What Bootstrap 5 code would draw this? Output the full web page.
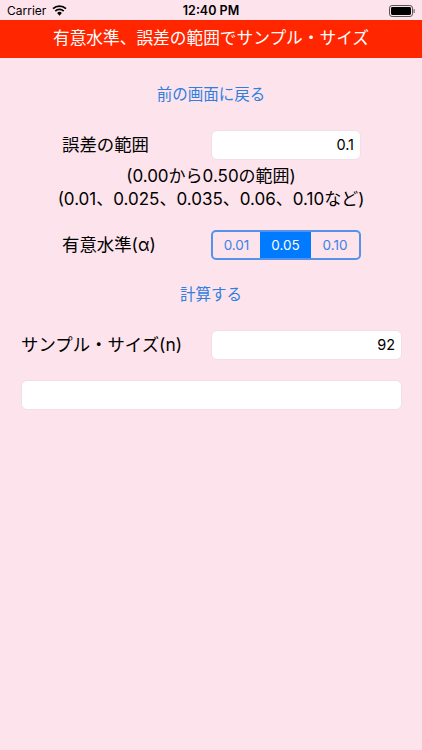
<!DOCTYPE html>
<html lang="ja">
<head>
<meta charset="utf-8">
<link href="https://cdn.jsdelivr.net/npm/bootstrap@5.3.0/dist/css/bootstrap.min.css" rel="stylesheet">
<style>
html,body{height:100%}
body{background:#fde3ec;color:#000;font-family:"Inter","Noto Sans CJK JP",sans-serif;font-size:17px;overflow:hidden}
.status-bar{height:20px;padding:1px 7px 0;font-size:12px;line-height:20px;position:relative}
.status-time{font-weight:600;position:absolute;left:0;right:0;text-align:center;font-size:12.5px}
.title-bar{height:38px;background:#ff2600;color:#fff;font-size:16.7px}
.link-btn{color:#2f7fe0;font-size:15.5px;line-height:20px;text-decoration:none;background:none;border:0;padding:0}
.back-row{margin-top:27px;height:20px}
.field-row{margin-top:25px;height:30px}
.lbl{font-size:17.4px;line-height:24px;white-space:nowrap}
.lbl-a{margin-left:62px;width:149px}
.lbl-b{margin-left:21px;width:190px}
.inp{height:30px;background:#fff;border:1px solid #efdfe6;border-radius:6px;font-size:14.5px;line-height:28px;text-align:right;padding:0 6px;color:#000}
.inp-a{width:150px}
.inp-b{width:191px}
.hint{margin-top:5px;font-size:17px;line-height:23px;text-align:center}
.seg-row{margin-top:19px;height:30px}
.seg{width:150px;height:30px;border:2px solid #5493e8;border-radius:5px;overflow:hidden}
.seg-i{color:#3b82e6;font-size:13.5px;line-height:26px;text-align:center}
.seg-i.one{width:47px}
.seg-i.two{width:51px;background:#007aff;color:#fff}
.seg-i.three{flex:1 1 0}
.calc-row{margin-top:25px;height:20px}
.inp-c{width:381px;margin:20px 0 0 21px}
</style>
</head>
<body>
<div class="status-bar d-flex align-items-center">
  <span>Carrier</span>
  <svg style="margin-left:6px" width="15" height="11" viewBox="0 0 15 11"><path d="M7.5 10.8 L5.1 8 a3.4 3.4 0 0 1 4.8 0Z" fill="#000"/><path d="M3.3 6.1a6 6 0 0 1 8.4 0" fill="none" stroke="#000" stroke-width="1.7"/><path d="M1 3.7a9.3 9.3 0 0 1 13 0" fill="none" stroke="#000" stroke-width="1.7"/></svg>
  <span class="status-time">12:40 PM</span>
  <svg class="ms-auto" width="26" height="12" viewBox="0 0 26 12"><rect x=".5" y=".5" width="23" height="11" rx="2.6" fill="none" stroke="#555"/><rect x="2" y="2" width="20" height="8" rx="1.4" fill="#000"/><rect x="24.5" y="4" width="1.3" height="4" rx=".6" fill="#777"/></svg>
</div>
<div class="title-bar d-flex align-items-center justify-content-center">有意水準、誤差の範囲でサンプル・サイズ</div>
<div class="back-row d-flex justify-content-center"><a class="link-btn" href="#">前の画面に戻る</a></div>
<div class="field-row d-flex align-items-center">
  <div class="lbl lbl-a">誤差の範囲</div>
  <div class="inp inp-a">0.1</div>
</div>
<div class="hint">(0.00から0.50の範囲)<br>(0.01、0.025、0.035、0.06、0.10など)</div>
<div class="seg-row d-flex align-items-center">
  <div class="lbl lbl-a">有意水準(α)</div>
  <div class="seg d-flex">
    <div class="seg-i one">0.01</div>
    <div class="seg-i two">0.05</div>
    <div class="seg-i three">0.10</div>
  </div>
</div>
<div class="calc-row d-flex justify-content-center"><a class="link-btn" href="#">計算する</a></div>
<div class="field-row d-flex align-items-center">
  <div class="lbl lbl-b">サンプル・サイズ(n)</div>
  <div class="inp inp-b">92</div>
</div>
<div class="inp inp-c"></div>
<script src="https://cdn.jsdelivr.net/npm/bootstrap@5.3.0/dist/js/bootstrap.bundle.min.js"></script>
</body>
</html>
